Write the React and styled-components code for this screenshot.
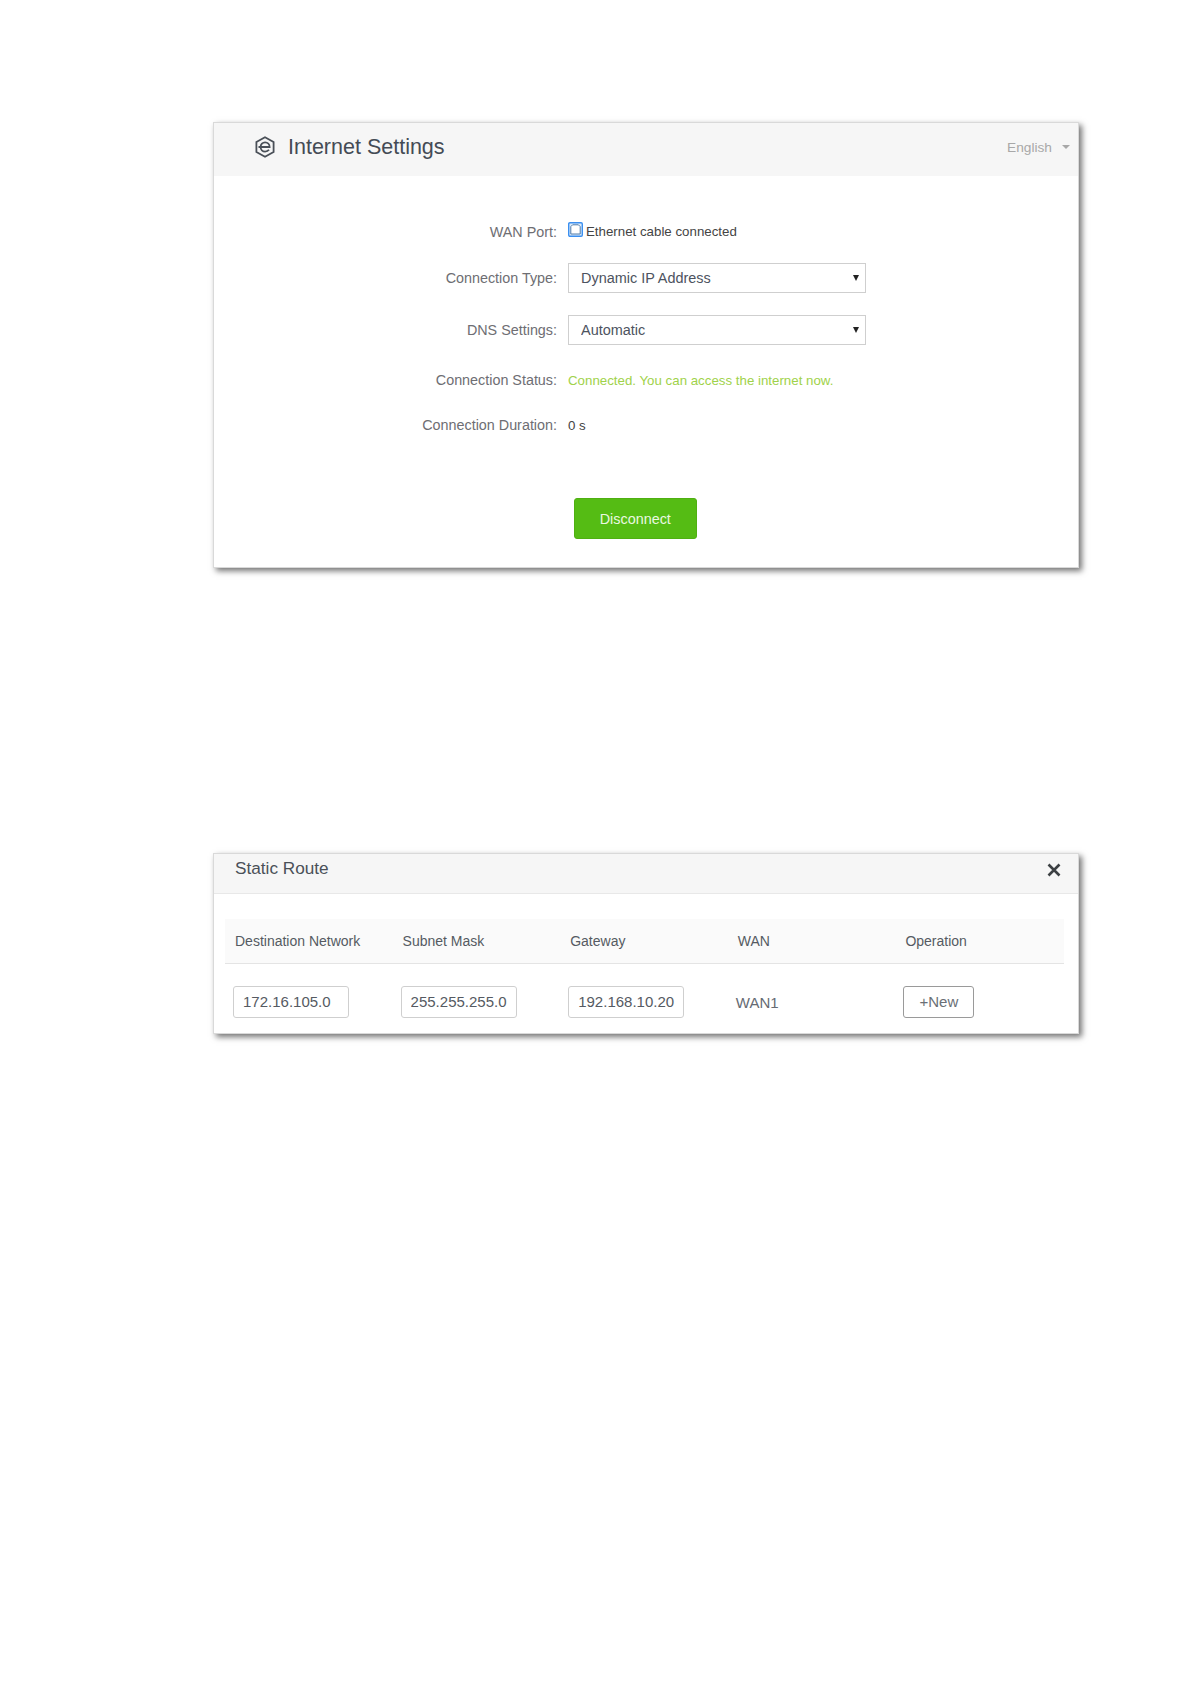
import styled, { createGlobalStyle } from "styled-components";

const GlobalStyle = createGlobalStyle`
  html, body {
    margin: 0;
    padding: 0;
    background: #fff;
  }
  body {
    font-family: "Liberation Sans", Arial, sans-serif;
  }
`;

const Page = styled.div`
  width: 1191px;
  min-height: 1684px;
  padding: 122px 0 0 213px;
  box-sizing: border-box;
`;

const Panel = styled.section`
  width: 866px;
  box-sizing: border-box;
  margin-bottom: ${(p) => p.$gap || 0}px;
  background: #fff;
  border: 1px solid #d9d9d9;
  box-shadow: 3px 3px 6px rgba(0, 0, 0, 0.55);
`;

const MainHeader = styled.header`
  display: flex;
  align-items: center;
  height: 53px;
  box-sizing: border-box;
  padding: 0 8px 5px 41px;
  background: #f6f6f6;
`;

const Title = styled.h1`
  flex: 1;
  margin: 0 0 0 13px;
  font-size: 21.5px;
  font-weight: 400;
  color: #444b55;
`;

const Language = styled.div`
  display: flex;
  align-items: center;
  gap: 10px;
  font-size: 13.7px;
  color: #a8a8a8;
`;

const Caret = styled.span`
  width: 0;
  height: 0;
  border-left: 4px solid transparent;
  border-right: 4px solid transparent;
  border-top: 4px solid #a8a8a8;
`;

const Form = styled.div`
  padding-top: 33px;
`;

const Row = styled.div`
  display: grid;
  grid-template-columns: 343px 1fr;
  column-gap: 11px;
  align-items: center;
  height: ${(p) => p.$h}px;
`;

const Label = styled.div`
  text-align: right;
  font-size: 14.35px;
  color: #6e6e73;
`;

const Value = styled.div`
  display: flex;
  align-items: center;
  gap: 3px;
  font-size: 13.3px;
  color: ${(p) => p.$color || "#444"};
`;

const PortValue = styled(Value)`
  padding-bottom: 2px;
`;

const PortWrap = styled.span`
  display: flex;
  margin-top: -3px;
`;

const SelectWrap = styled.div`
  position: relative;
  width: 298px;
  height: 30px;
`;

const Select = styled.select`
  display: block;
  width: 100%;
  height: 100%;
  box-sizing: border-box;
  padding: 0 0 0 12px;
  appearance: none;
  background: #fff;
  border: 1px solid #cfcfcf;
  border-radius: 0;
  font-family: inherit;
  font-size: 14.45px;
  color: #4d5360;
`;

const SelectArrow = styled.span`
  position: absolute;
  top: 12px;
  right: 7px;
  width: 0;
  height: 0;
  border-left: 3px solid transparent;
  border-right: 3px solid transparent;
  border-top: 6px solid #222;
`;

const Actions = styled.div`
  padding: 49px 0 28px 359.5px;
`;

const PrimaryButton = styled.button`
  display: block;
  width: 123.5px;
  height: 41px;
  background: #55bc14;
  border: 1px solid #4fb012;
  border-radius: 3px;
  font-family: inherit;
  font-size: 14.4px;
  color: #eaf8e0;
`;

const ModalHeader = styled.header`
  display: flex;
  justify-content: space-between;
  height: 40px;
  box-sizing: border-box;
  padding: 4px 17px 0 21px;
  background: #f6f6f6;
  border-bottom: 1px solid #e8e8e8;
`;

const ModalTitle = styled.h2`
  margin: 0;
  font-size: 17.2px;
  line-height: 20px;
  font-weight: 400;
  color: #4a5058;
`;

const CloseIcon = styled.svg`
  width: 14px;
  height: 14px;
  margin-top: 5px;
`;

const Table = styled.div`
  margin: 25px 14px 0 10.5px;
`;

const TableRow = styled.div`
  display: grid;
  grid-template-columns: repeat(5, 167.6px);
  align-items: center;
`;

const HeadRow = styled(TableRow)`
  height: 45px;
  box-sizing: border-box;
  background: #fafafa;
  border-bottom: 1px solid #e4e4e4;
`;

const HeadCell = styled.div`
  padding-left: 10.5px;
  font-size: 14px;
  color: #555a62;
`;

const BodyRow = styled(TableRow)`
  height: 69px;
  box-sizing: border-box;
  padding-top: 22px;
  padding-bottom: 15px;
`;

const Cell = styled.div`
  padding-left: 8.5px;
  font-size: 15px;
  color: #666b73;
`;

const TextInput = styled.input`
  display: block;
  width: 116px;
  height: 32px;
  box-sizing: border-box;
  padding: 0 0 1px 9px;
  background: #fff;
  border: 1px solid #cfcfcf;
  border-radius: 3px;
  font-family: inherit;
  font-size: 15px;
  color: #555a62;
`;

const GhostButton = styled.button`
  display: block;
  width: 71px;
  height: 32px;
  padding-bottom: 2px;
  background: #fff;
  border: 1px solid #9a9a9a;
  border-radius: 3px;
  font-family: inherit;
  font-size: 15px;
  color: #6a6f76;
`;

const HexLogo = () => (
  <svg width="20" height="22" viewBox="0 0 20 22" fill="none" stroke="#4a5058" strokeWidth="1.8">
    <path d="M10 1.2 18.6 6v10L10 20.8 1.4 16V6z" />
    <path d="M3.5 11H14.6c0-2.8-2-4.6-4.5-4.6S5.6 8.400 5.600 11s2 4.600 4.500 4.600c1.600 0 3-.6 3.900-1.800" />
  </svg>
);

const PortIcon = () => (
  <svg width="15" height="15" viewBox="0 0 15 15" fill="none">
    <rect x="0.7" y="0.7" width="13.6" height="13.6" rx="1.2" fill="#dcebfb" stroke="#3b8ff0" strokeWidth="1.4" />
    <path d="M2.800 12V4.600L4.600 2.800h5.800L12.200 4.600V12z" stroke="#4f7ba8" strokeWidth="1" fill="#fff" />
  </svg>
);

const columns = ["Destination Network", "Subnet Mask", "Gateway", "WAN", "Operation"];

const App = () => {
  return (
    <>
      <GlobalStyle />
      <Page>
        <Panel $gap={285}>
          <MainHeader>
            <HexLogo />
            <Title>Internet Settings</Title>
            <Language>
              English
              <Caret />
            </Language>
          </MainHeader>
          <Form>
            <Row $h={46}>
              <Label>WAN Port:</Label>
              <PortValue>
                <PortWrap>
                  <PortIcon />
                </PortWrap>
                Ethernet cable connected
              </PortValue>
            </Row>
            <Row $h={46}>
              <Label>Connection Type:</Label>
              <SelectWrap>
                <Select defaultValue="dynamic">
                  <option value="dynamic">Dynamic IP Address</option>
                </Select>
                <SelectArrow />
              </SelectWrap>
            </Row>
            <Row $h={58}>
              <Label>DNS Settings:</Label>
              <SelectWrap>
                <Select defaultValue="auto">
                  <option value="auto">Automatic</option>
                </Select>
                <SelectArrow />
              </SelectWrap>
            </Row>
            <Row $h={42}>
              <Label>Connection Status:</Label>
              <Value $color="#a0d24a">Connected. You can access the internet now.</Value>
            </Row>
            <Row $h={48}>
              <Label>Connection Duration:</Label>
              <Value>0 s</Value>
            </Row>
          </Form>
          <Actions>
            <PrimaryButton>Disconnect</PrimaryButton>
          </Actions>
        </Panel>

        <Panel>
          <ModalHeader>
            <ModalTitle>Static Route</ModalTitle>
            <CloseIcon viewBox="0 0 14 14" fill="none" stroke="#3c4043" strokeWidth="2.6">
              <path d="M1.500 1.500 12.500 12.500M12.500 1.500 1.500 12.500" />
            </CloseIcon>
          </ModalHeader>
          <Table>
            <HeadRow>
              {columns.map((name) => (
                <HeadCell key={name}>{name}</HeadCell>
              ))}
            </HeadRow>
            <BodyRow>
              <Cell>
                <TextInput defaultValue="172.16.105.0" />
              </Cell>
              <Cell>
                <TextInput defaultValue="255.255.255.0" />
              </Cell>
              <Cell>
                <TextInput defaultValue="192.168.10.20" />
              </Cell>
              <Cell>WAN1</Cell>
              <Cell>
                <GhostButton>+New</GhostButton>
              </Cell>
            </BodyRow>
          </Table>
        </Panel>
      </Page>
    </>
  );
};

export default App;
